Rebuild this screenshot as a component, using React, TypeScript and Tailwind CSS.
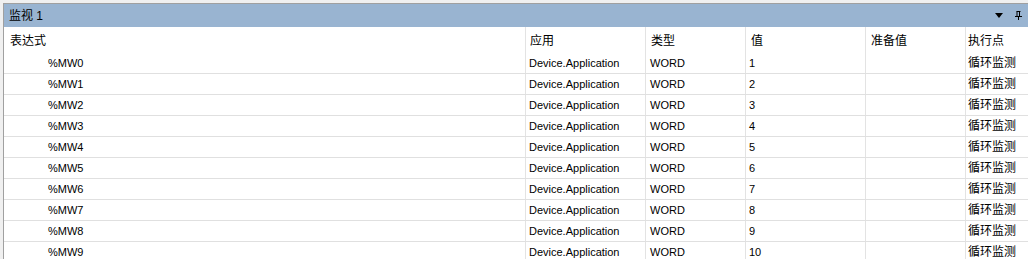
const font = { fontFamily: '"Liberation Sans", "Noto Sans CJK SC", sans-serif' }

const rows = Array.from({ length: 10 }, (_, i) => ({
  expr: `%MW${i}`,
  app: 'Device.Application',
  type: 'WORD',
  value: String(i + 1),
}))

const cols = 'grid grid-cols-[521px_120px_100px_120px_100px_120px]'

export default function App() {
  return (
    <div className="w-[1028px] h-[259px] overflow-hidden bg-[#f0f0f0] pt-[3px] pl-[3px]" style={font}>
      <div className="h-full border-t border-l border-[#a0a0a0] bg-white flex flex-col overflow-hidden">
        {/* title bar */}
        <div className="h-[23px] shrink-0 bg-[#99b4d1] flex items-center pl-[5px] pr-[6px] text-black">
          <span className="text-[12px] leading-none">监视 1</span>
          <div className="ml-auto flex items-center gap-[12px]">
            <svg width="8" height="5" viewBox="0 0 8 5">
              <path d="M0 0H8L4 5Z" fill="#000" />
            </svg>
            <svg width="7" height="9" viewBox="0 0 7 9">
              <path d="M1.5 0.5H5.5M2 0.5V5.5M4.5 0.5V5.5M0 5.5H7M3.5 5.5V9" stroke="#000" strokeWidth="1" fill="none" />
            </svg>
          </div>
        </div>

        {/* header */}
        <div className={`${cols} h-[26px] shrink-0 text-[12px] text-black`}>
          <div className="pl-[6px] pt-[5px]">表达式</div>
          <div className="pl-[4px] pt-[5px] border-l border-[#e3e3e3]">应用</div>
          <div className="pl-[5px] pt-[5px] border-l border-[#e3e3e3]">类型</div>
          <div className="pl-[5px] pt-[5px] border-l border-[#e3e3e3]">值</div>
          <div className="pl-[5px] pt-[5px] border-l border-[#e3e3e3]">准备值</div>
          <div className="pl-[2px] pt-[5px] border-l border-[#e3e3e3]">执行点</div>
        </div>

        {/* rows */}
        {rows.map((r) => (
          <div key={r.expr} className={`${cols} h-[21px] shrink-0 border-b border-[#e0e0e0] text-[11px] text-black`}>
            <div className="pl-[44px] flex items-center">{r.expr}</div>
            <div className="pl-[3px] flex items-center border-l border-[#e3e3e3]">{r.app}</div>
            <div className="pl-[4px] flex items-center border-l border-[#e3e3e3]">{r.type}</div>
            <div className="pl-[3px] flex items-center border-l border-[#e3e3e3]">{r.value}</div>
            <div className="border-l border-[#e3e3e3]" />
            <div className="pl-[2px] flex items-center border-l border-[#e3e3e3] text-[12px] whitespace-nowrap">循环监测</div>
          </div>
        ))}
      </div>
    </div>
  )
}
